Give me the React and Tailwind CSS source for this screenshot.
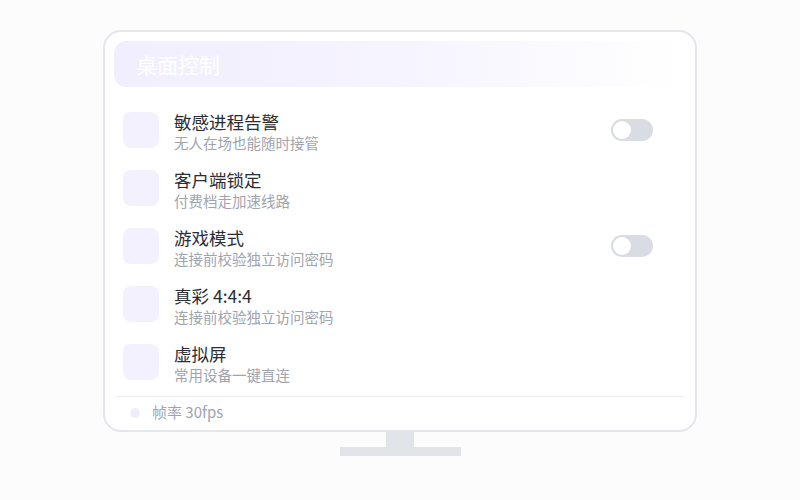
const rows = [
  { title: '敏感进程告警', sub: '无人在场也能随时接管', toggle: true },
  { title: '客户端锁定', sub: '付费档走加速线路', toggle: false },
  { title: '游戏模式', sub: '连接前校验独立访问密码', toggle: true },
  { title: '真彩 4:4:4', sub: '连接前校验独立访问密码', toggle: false },
  { title: '虚拟屏', sub: '常用设备一键直连', toggle: false },
];

function Toggle() {
  return (
    <div className="w-[42px] h-[22px] rounded-full bg-[#d9dce2] p-[2px] flex items-center">
      <div className="w-[18px] h-[18px] rounded-full bg-white" />
    </div>
  );
}

export default function App() {
  return (
    <div
      className="w-[800px] h-[500px] bg-[#fcfcfd] flex flex-col items-center pt-[30px]"
      style={{ fontFamily: '"Noto Sans CJK SC", "Noto Sans", sans-serif' }}
    >
      <div className="w-[594px] h-[402px] rounded-[18px] border-2 border-[#e4e6eb] bg-white flex flex-col p-[9px] pb-0">
        <div className="h-[46px] shrink-0 rounded-[12px] bg-gradient-to-r from-[#f1eefe] via-[#f6f4fe] to-white flex items-center justify-between px-[22px]">
          <span className="text-[21px] text-white leading-none">桌面控制</span>
          <div className="flex gap-[5px] mr-[4px]">
            <span className="w-[4px] h-[4px] rounded-full bg-white" />
            <span className="w-[4px] h-[4px] rounded-full bg-white" />
            <span className="w-[4px] h-[4px] rounded-full bg-white" />
          </div>
        </div>

        <div className="flex flex-col gap-[22px] pt-[25px] pl-[9px] pr-[33px]">
          {rows.map((r) => (
            <div key={r.title} className="h-[36px] flex items-start">
              <div className="w-[36px] h-[36px] shrink-0 rounded-[8px] bg-[#f3f1fe]" />
              <div className="ml-[15px] flex flex-col -mt-[1px]">
                <span className="text-[17.5px] leading-[22px] text-[#2b2d33]">{r.title}</span>
                <span className="text-[14.5px] leading-[20px] text-[#a0a4ad]">{r.sub}</span>
              </div>
              {r.toggle ? (
                <div className="ml-auto mt-[7px]">
                  <Toggle />
                </div>
              ) : null}
            </div>
          ))}
        </div>

        <div className="mt-auto border-t border-[#eceef2] h-[34px] flex items-center px-[14px] mx-[2px] pb-[2px]">
          <span className="w-[10px] h-[10px] rounded-full bg-[#efedfc]" />
          <span className="ml-[12px] text-[15px] text-[#a0a4ad]">帧率 30fps</span>
        </div>
      </div>
      <div className="w-[28px] h-[15px] bg-[#e1e4e9]" />
      <div className="w-[121px] h-[9px] bg-[#e1e4e9]" />
    </div>
  );
}
